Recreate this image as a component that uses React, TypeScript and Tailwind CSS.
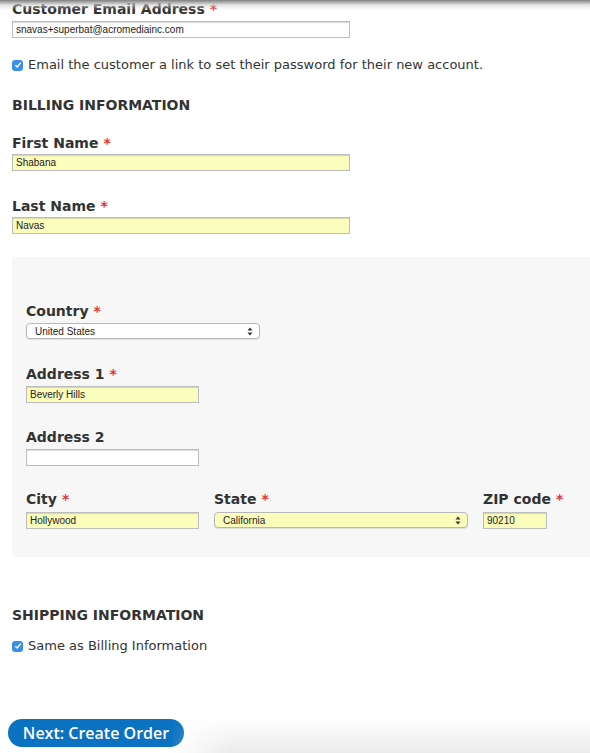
function Req() {
  return <span className="text-[#e0333a] font-bold ml-[5px]">*</span>;
}

function Label({ text, req = true }: { text: string; req?: boolean }) {
  return (
    <div className="text-[14px] leading-[18px] font-bold text-[#333]">
      {text}
      {req && <Req />}
    </div>
  );
}

function TextField({ value, yellow = true, w }: { value: string; yellow?: boolean; w: string }) {
  return (
    <div
      className={`${w} h-[17px] border border-[#bdbdbd] shadow-[inset_0_1px_1px_rgba(0,0,0,0.15)] text-[10px] leading-[15px] px-[3px] text-[#222] font-['Liberation_Sans',sans-serif] ${
        yellow ? "bg-[#fbfdbd]" : "bg-white"
      }`}
    >
      {value}
    </div>
  );
}

function SelectField({ value, w, yellow = false }: { value: string; w: string; yellow?: boolean }) {
  return (
    <div
      className={`${w} h-[16px] rounded-[4px] border border-[#b8b8b8] shadow-[0_1px_1px_rgba(0,0,0,0.1)] flex items-center justify-between pl-[8px] pr-[6px] text-[10px] text-[#222] font-['Liberation_Sans',sans-serif] ${
        yellow ? "bg-[#fbfdbd]" : "bg-white"
      }`}
    >
      <span>{value}</span>
      <svg width="6" height="9" viewBox="0 0 6 9">
        <path d="M0.5 3.6 L3 0.5 L5.5 3.6 Z M0.5 5.4 L3 8.5 L5.5 5.4 Z" fill="#333" />
      </svg>
    </div>
  );
}

function Check({ text }: { text: string }) {
  return (
    <div className="flex items-center gap-[5px] text-[13px] leading-[16px] text-[#333]">
      <span className="w-[11px] h-[11px] rounded-[3px] bg-[#3b8fe4] flex items-center justify-center">
        <svg width="8" height="8" viewBox="0 0 8 8">
          <path d="M1.3 4.2 L3.2 6 L6.8 1.6" stroke="white" strokeWidth="1.4" fill="none" />
        </svg>
      </span>
      <span>{text}</span>
    </div>
  );
}

export default function App() {
  return (
    <div className="relative w-[590px] h-[753px] bg-white overflow-hidden font-['DejaVu_Sans',sans-serif]">
      <div className="absolute top-0 left-0 right-0 h-[10px] bg-gradient-to-b from-[#808080] via-[#d0d0d0]/60 to-transparent z-10" />
      <div className="absolute bottom-0 left-[170px] right-0 h-[36px] bg-gradient-to-b from-transparent to-[#ebebeb] [mask-image:linear-gradient(to_right,transparent,black_60px)]" />

      <div className="pl-[12px]">
        <Label text="Customer Email Address" />
        <div className="mt-[3px]">
          <TextField w="w-[338px]" value="snavas+superbat@acromediainc.com" yellow={false} />
        </div>
        <div className="mt-[19px]">
          <Check text="Email the customer a link to set their password for their new account." />
        </div>
        <div className="mt-[23px] text-[14px] leading-[18px] font-bold text-[#333]">BILLING INFORMATION</div>

        <div className="mt-[20px]">
          <Label text="First Name" />
          <div className="mt-[2px]">
            <TextField w="w-[338px]" value="Shabana" />
          </div>
        </div>
        <div className="mt-[26px]">
          <Label text="Last Name" />
          <div className="mt-[2px]">
            <TextField w="w-[338px]" value="Navas" />
          </div>
        </div>
      </div>

      <div className="ml-[12px] mt-[23px] h-[300px] bg-[#f7f7f7] pl-[14px] pt-[45px]">
        <Label text="Country" />
        <div className="mt-[3px]">
          <SelectField w="w-[234px]" value="United States" />
        </div>
        <div className="mt-[26px]">
          <Label text="Address 1" />
          <div className="mt-[3px]">
            <TextField w="w-[173px]" value="Beverly Hills" />
          </div>
        </div>
        <div className="mt-[25px]">
          <Label text="Address 2" req={false} />
          <div className="mt-[3px]">
            <TextField w="w-[173px]" value="" yellow={false} />
          </div>
        </div>
        <div className="mt-[24px] flex gap-[15px]">
          <div>
            <Label text="City" />
            <div className="mt-[4px]">
              <TextField w="w-[173px]" value="Hollywood" />
            </div>
          </div>
          <div>
            <Label text="State" />
            <div className="mt-[4px]">
              <SelectField w="w-[254px]" value="California" yellow />
            </div>
          </div>
          <div>
            <Label text="ZIP code" />
            <div className="mt-[4px]">
              <TextField w="w-[64px]" value="90210" />
            </div>
          </div>
        </div>
      </div>

      <div className="pl-[12px] mt-[49px]">
        <div className="text-[14px] leading-[18px] font-bold text-[#333]">SHIPPING INFORMATION</div>
        <div className="mt-[14px]">
          <Check text="Same as Billing Information" />
        </div>
      </div>

      <div className="pl-[8px] mt-[65px]">
        <button className="h-[28px] w-[176px] rounded-full bg-[#0b72c2] text-white text-[16px] leading-[28px] font-semibold font-['Open_Sans',sans-serif]">
          Next: Create Order
        </button>
      </div>
    </div>
  );
}
